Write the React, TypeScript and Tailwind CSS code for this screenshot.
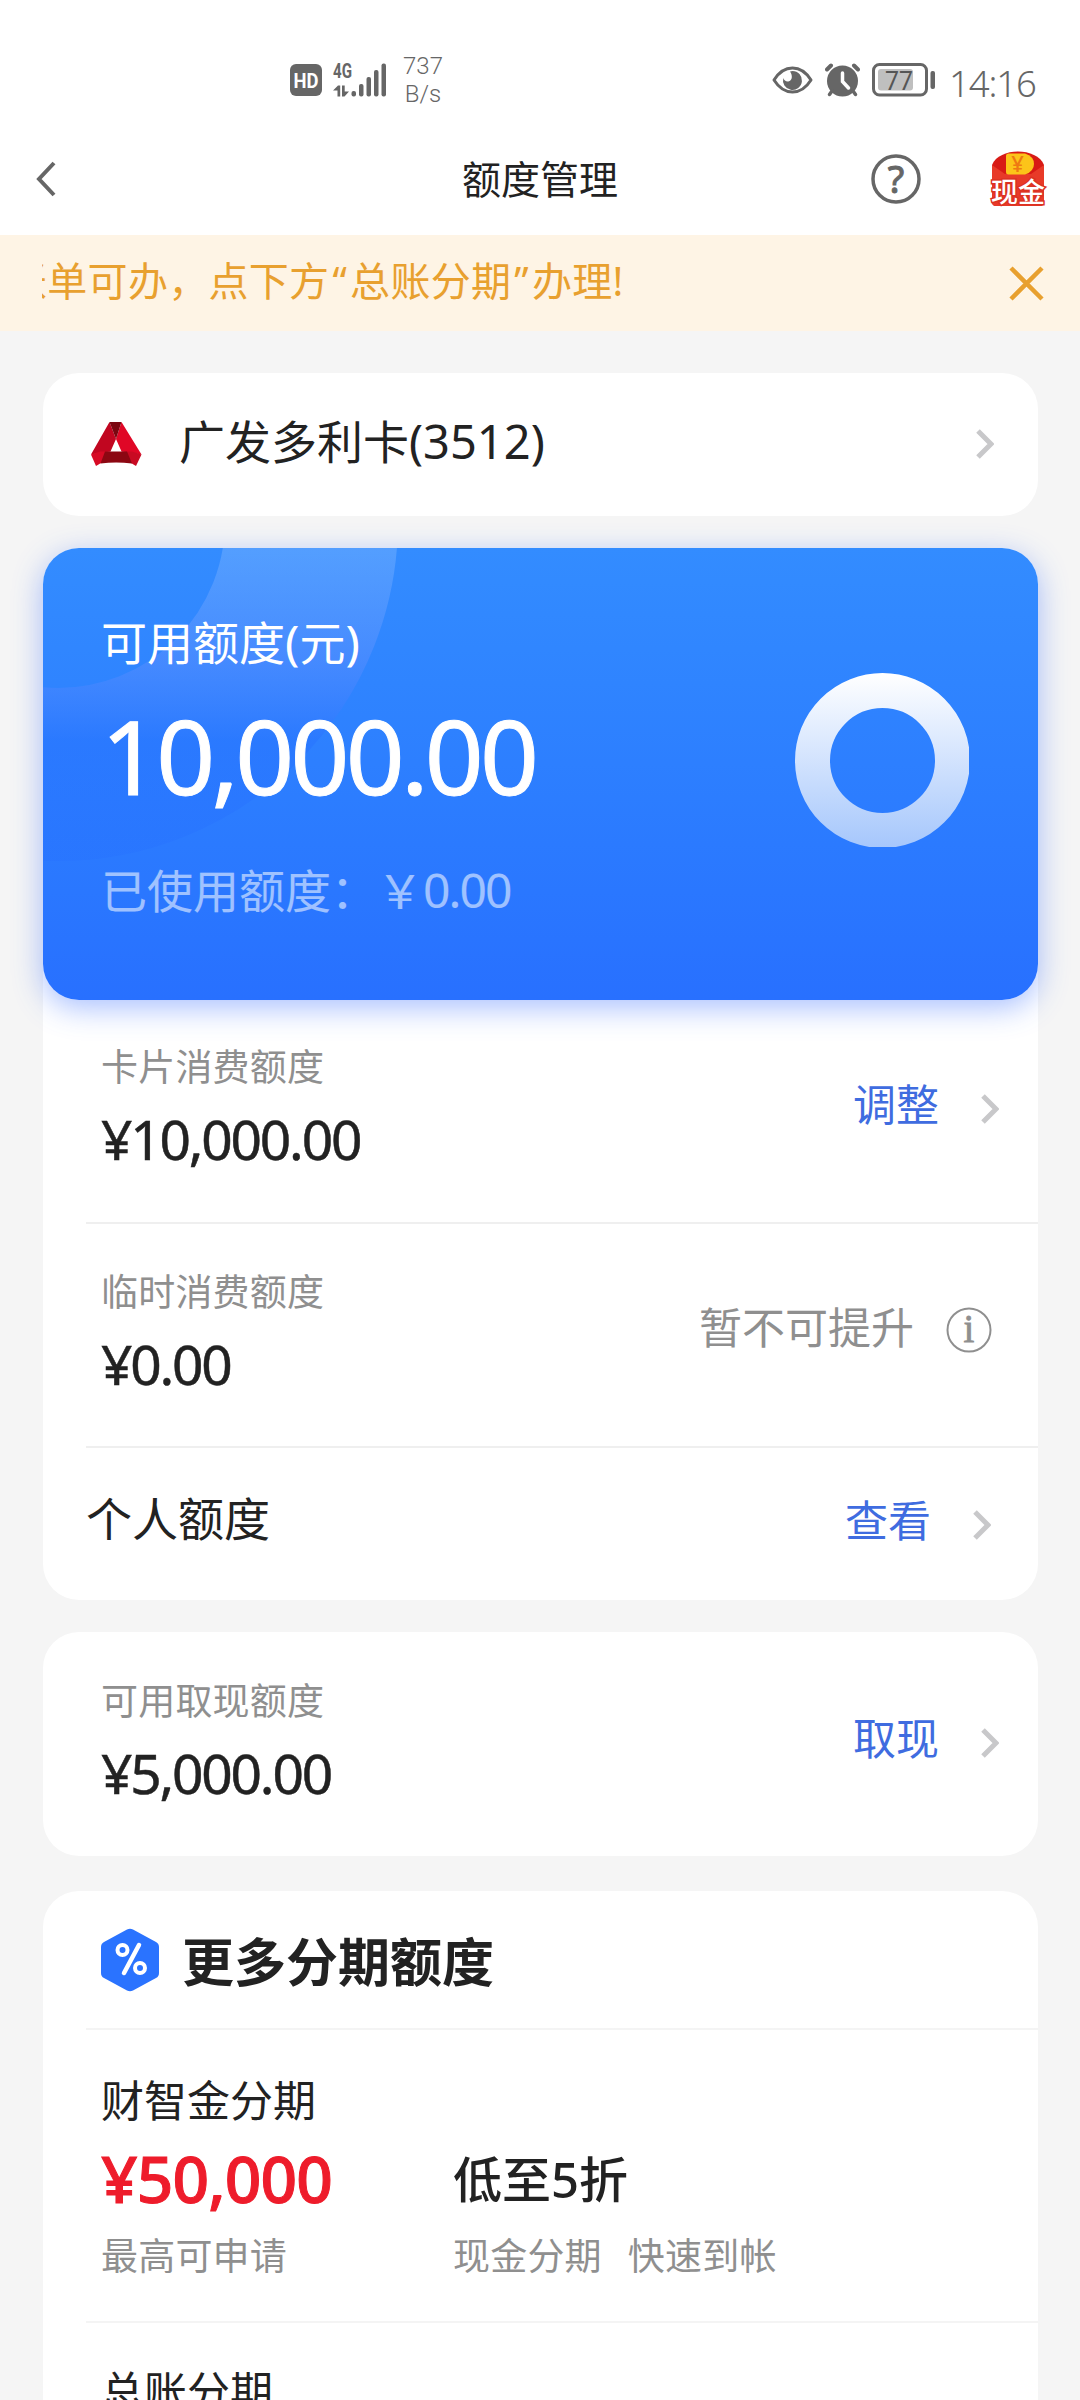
import type { ReactNode } from 'react';
import clsx from 'clsx';

function StatusBar() {
  return (
    <div className="flex h-[106px] items-center justify-between pt-[54px] pr-[39px] pl-[290px] text-[#666]">
      <div className="flex items-center">
        <svg width="32" height="32" viewBox="0 0 32 32">
          <rect width="32" height="32" rx="6" fill="#666" />
          <text x="16" y="23.5" textAnchor="middle" fontSize="20" fontWeight="700" fill="#fff" fontFamily="Roboto, sans-serif" textLength="25" lengthAdjust="spacingAndGlyphs">HD</text>
        </svg>
        <svg className="ml-[11px] overflow-visible" width="53" height="34" viewBox="0 0 53 34" fill="#666">
          <text x="0" y="15" fontSize="20" fontWeight="700" fontFamily="Roboto, sans-serif" textLength="19" lengthAdjust="spacingAndGlyphs">4G</text>
          <path d="M0 27.5 5 22.5h2.2V33.5H4.5V27.5zM9 22.5h2.7V28.5H16L11.5 33.5H9z" />
          <rect x="18.5" y="28" width="4.5" height="5.5" rx="2" />
          <rect x="26" y="21" width="4.5" height="12.5" rx="2" />
          <rect x="33.5" y="14" width="4.5" height="19.5" rx="2" />
          <rect x="41" y="7" width="4.5" height="26.5" rx="2" />
          <rect x="48.5" y="0.5" width="4.5" height="33" rx="2" />
        </svg>
        <div className="ml-[17px] text-center font-[Roboto,sans-serif] text-[24px] leading-[28px] font-light">
          <p>737</p>
          <p>B/s</p>
        </div>
      </div>
      <div className="flex items-center">
        <svg width="41" height="28" viewBox="0 0 41 28" fill="none">
          <path d="M2 14C7 6 13 2 20.500 2S34 6 39 14C34 22 28 26 20.500 26S7 22 2 14z" stroke="#666" strokeWidth="3" strokeLinejoin="round" />
          <path d="M20.500 5a9.500 9.500 0 1 1-9.200 7c.8 2.600 3.200 4 5.700 3.200 3.400-1.200 3.800-6 1-9.800z" fill="#666" />
        </svg>
        <svg className="ml-3" width="35" height="34" viewBox="0 0 35 34" fill="none" strokeLinecap="round">
          <circle cx="17.500" cy="18" r="15.500" fill="#666" />
          <path d="M2 6.500 6 2.500M33 6.500 29 2.500" stroke="#666" strokeWidth="4" />
          <path d="M7 28 4.500 31.500M28 28l2.500 3.500" stroke="#666" strokeWidth="3.500" />
          <path d="M17.500 10v8.500l6 6.500" stroke="#fff" strokeWidth="3.500" />
        </svg>
        <svg className="ml-3" width="63" height="34" viewBox="0 0 63 34">
          <rect x="1.500" y="1.500" width="53" height="30.500" rx="6" fill="none" stroke="#666" strokeWidth="3" />
          <rect x="6" y="6" width="35" height="21.500" rx="3" fill="#bfbfbf" />
          <rect x="58.500" y="8" width="4.500" height="18" rx="2" fill="#666" />
          <text x="27" y="26.500" textAnchor="middle" fontSize="26" fill="#555" fontFamily="Roboto, sans-serif" textLength="28" lengthAdjust="spacingAndGlyphs">77</text>
        </svg>
        <p className="ml-[14px] w-[92px] pt-[6px] text-[36.5px] leading-[44px] font-light tracking-[-0.03em] whitespace-nowrap">14:16</p>
      </div>
    </div>
  );
}

function CashPacket() {
  return (
    <svg className="overflow-visible" width="56" height="58" viewBox="0 0 56 58">
      <path d="M2 15C9-3 47-3 54 15V52q0 4-4 4H6q-4 0-4-4z" fill="#d81a15" />
      <path d="M2 15 15 24H41L54 15V52q0 4-4 4H6q-4 0-4-4z" fill="#e83a28" />
      <path d="M16 6q0-2.500 2.500-2.500H35q9 3 9 10.500t-9 10.500H18.500Q16 24.500 16 22z" fill="#fcc419" />
      <text x="27.500" y="21.500" textAnchor="middle" fontSize="22" fontWeight="500" fill="#ee7a12">¥</text>
      <text x="28" y="52" textAnchor="middle" fontSize="27" fontWeight="500" fill="#fff" stroke="#dc3222" strokeWidth="3" paintOrder="stroke" textLength="54">现金</text>
    </svg>
  );
}

function Header() {
  return (
    <header className="grid h-[129px] grid-cols-[1fr_auto_1fr] items-center pt-4 pr-[34px] pl-[34px]">
      <svg className="ml-[2px]" width="20" height="36" viewBox="0 0 20 36" fill="none">
        <path d="M18 2 3 18 18 34" stroke="#666" strokeWidth="4" />
      </svg>
      <h1 className="text-[39px] leading-none text-[#222]">额度管理</h1>
      <div className="flex items-center justify-end gap-[69px]">
        <svg className="overflow-visible" width="50" height="50" viewBox="0 0 50 50">
          <circle cx="25" cy="25" r="23" fill="none" stroke="#666" strokeWidth="3.500" />
          <text x="25" y="38.500" textAnchor="middle" fontSize="38" fill="#666" stroke="#666" strokeWidth="1">?</text>
        </svg>
        <CashPacket />
      </div>
    </header>
  );
}

function Notice() {
  return (
    <div className="flex h-[96px] items-center justify-between bg-[#fef4e5] pr-[36px] pl-[42px] text-[#e8a02f]">
      <div className="mb-[5px] overflow-hidden">
        <p className="-ml-[35px] text-[40px] leading-[56px] tracking-[0.3px] whitespace-nowrap">
          账单可办，点下方<span className="px-[3px]">“</span>总账分期<span className="px-[3px]">”</span>办理!
        </p>
      </div>
      <svg width="35" height="35" viewBox="0 0 35 35" fill="none">
        <path d="M2 2 33 33M33 2 2 33" stroke="#e8a02f" strokeWidth="4.500" />
      </svg>
    </div>
  );
}

function Chevron() {
  return (
    <svg className="shrink-0" width="18" height="30" viewBox="0 0 18 30" fill="none">
      <path d="M2 2 15 15 2 28" stroke="#c8c8ca" strokeWidth="5" />
    </svg>
  );
}

function BankLogo() {
  return (
    <svg width="52" height="46" viewBox="0 0 52 46">
      <path d="M19.500 0 26 17 20.500 29.500 10 31 1 32.500z" fill="#c10620" />
      <path d="M31.500 0 51.500 32.500 42 31 31.500 29.500 26 17z" fill="#e00726" />
      <path d="M19.500 0H31.500L26 17z" fill="#7a0710" />
      <path d="M1 32.500 10 29.500H20.500L11 41 6 44z" fill="#d70a25" />
      <path d="M51.500 32.500 42 29.500H31.500L41 41 46 44z" fill="#c80a22" />
      <path d="M15 29.500H37L42 41.500Q26 39.500 10.500 41.500z" fill="#8c0712" />
    </svg>
  );
}

function QuotaCard() {
  return (
    <div className="relative flex h-[452px] items-start justify-between overflow-hidden rounded-[36px] bg-gradient-to-b from-[#338cff] to-[#2870ff] pl-[58px] text-white">
      <svg className="absolute top-0 left-0" width="400" height="452" viewBox="0 0 400 452">
        <defs>
          <linearGradient id="arc" x1="0" y1="0" x2="0" y2="320" gradientUnits="userSpaceOnUse">
            <stop offset="0" stopColor="#fff" stopOpacity="0.16" />
            <stop offset="0.35" stopColor="#a8a0ff" stopOpacity="0.18" />
            <stop offset="0.6" stopColor="#2060ff" stopOpacity="0.22" />
            <stop offset="1" stopColor="#1f60ff" stopOpacity="0.12" />
          </linearGradient>
        </defs>
        <circle cx="15" cy="-27" r="253.500" fill="none" stroke="url(#arc)" strokeWidth="173" />
      </svg>
      <div className="relative">
        <p className="mt-[67px] text-[46px] leading-[54px]">
          可用额度<span className="text-[48px]">(</span>元<span className="text-[48px]">)</span>
        </p>
        <p className="mt-[26px] text-[103px] leading-[120px] tracking-[-0.036em] [-webkit-text-stroke:1px_white]">10,000.00</p>
        <p className="mt-[48px] text-[46px] leading-[54px] text-white/55">
          已使用额度：￥<span className="text-[48px] tracking-[-0.04em]">0.00</span>
        </p>
      </div>
      <svg className="relative mt-[125px] mr-[69px]" width="174" height="174" viewBox="0 0 174 174">
        <defs>
          <linearGradient id="ring" x1="0" y1="0" x2="0" y2="174" gradientUnits="userSpaceOnUse">
            <stop offset="0" stopColor="#fff" />
            <stop offset="1" stopColor="#a6c7fc" />
          </linearGradient>
        </defs>
        <circle cx="87.500" cy="87.500" r="70" fill="none" stroke="url(#ring)" strokeWidth="35" />
      </svg>
    </div>
  );
}

interface LimitRowProps {
  label: string;
  amount: string;
  children: ReactNode;
  className?: string;
}

function LimitRow({ label, amount, children, className }: LimitRowProps) {
  return (
    <div className={clsx('flex justify-between pl-[15px]', className)}>
      <div>
        <p className="text-[37px] leading-[46px] tracking-[0.2px] text-[#8f8f8f]">{label}</p>
        <p className="mt-[19px] text-[55px] leading-[60px] tracking-[-0.04em] text-[#222] [-webkit-text-stroke:0.5px_#222]">{amount}</p>
      </div>
      <div className="mt-[35px] flex h-[56px] items-center">{children}</div>
    </div>
  );
}

function ActionLink({ text }: { text: string }) {
  return (
    <>
      <span className="mb-[5px] text-[43px] leading-none text-[#3f6ce0]">{text}</span>
      <span className="mt-1 ml-[42px]">
        <Chevron />
      </span>
    </>
  );
}

function PercentIcon() {
  return (
    <svg width="58" height="64" viewBox="0 0 58 64" fill="none">
      <path d="M26 1.500q3-1.500 6 0L55 14q3 1.500 3 5V45q0 3.500-3 5L32 62.500q-3 1.500-6 0L3 50q-3-1.500-3-5V19q0-3.500 3-5z" fill="#2a73ff" />
      <path d="M38 17 23 45" stroke="#fff" strokeWidth="4.500" strokeLinecap="round" />
      <circle cx="21.500" cy="22" r="5" stroke="#fff" strokeWidth="4" />
      <circle cx="39" cy="40" r="5" stroke="#fff" strokeWidth="4" />
    </svg>
  );
}

export default function App() {
  return (
    <div
      lang="zh-CN"
      className="h-[2400px] w-[1080px] overflow-hidden bg-[#f5f5f5] font-['Noto_Sans','Noto_Sans_CJK_SC',sans-serif] text-[#222]"
    >
      <div className="bg-white">
        <StatusBar />
        <Header />
      </div>
      <Notice />

      <main className="flex flex-col pt-[42px] pr-[42px] pl-[43px]">
        <section className="flex h-[143px] items-center rounded-[36px] bg-white pr-[44px] pl-[47px]">
          <BankLogo />
          <p className="mb-[7px] ml-[37px] flex-1 text-[46px] leading-none">
            广发多利卡<span className="text-[47px]">(3512)</span>
          </p>
          <div className="mb-[2px]">
            <Chevron />
          </div>
        </section>

        <section className="mt-8 rounded-[36px] bg-white">
          <div className="rounded-[36px] shadow-[0_8px_30px_rgba(50,105,255,0.42)]">
            <QuotaCard />
          </div>
          <div className="pl-[43px]">
            <LimitRow label="卡片消费额度" amount="¥10,000.00" className="h-[224px] border-b-2 border-[#efefef] pt-[44px] pr-[39px]">
              <ActionLink text="调整" />
            </LimitRow>
            <LimitRow label="临时消费额度" amount="¥0.00" className="h-[224px] border-b-2 border-[#efefef] pt-[45px] pr-[46px]">
              <span className="mb-[10px] text-[43px] leading-none text-[#8f8f8f]">暂不可提升</span>
              <svg className="mb-1 ml-[32px] overflow-visible" width="46" height="46" viewBox="0 0 46 46">
                <circle cx="23" cy="23" r="21.500" fill="none" stroke="#8f8f8f" strokeWidth="2" />
                <text x="23" y="35" textAnchor="middle" fontSize="39" fill="#8f8f8f" stroke="#8f8f8f" strokeWidth="0.8" fontFamily="'Liberation Serif', serif">i</text>
              </svg>
            </LimitRow>
            <div className="flex h-[150px] items-center pr-[44px]">
              <p className="mb-[11px] flex-1 text-[46px] leading-none">个人额度</p>
              <div className="flex items-center pr-[3px]">
                <ActionLink text="查看" />
              </div>
            </div>
            <div className="h-[2px]" />
          </div>
        </section>

        <section className="mt-8 h-[224px] rounded-[36px] bg-white pl-[43px]">
          <LimitRow label="可用取现额度" amount="¥5,000.00" className="pt-[46px] pr-[39px]">
            <ActionLink text="取现" />
          </LimitRow>
        </section>

        <section className="mt-[35px] rounded-t-[36px] bg-white pl-[43px]">
          <div className="flex h-[139px] items-center border-b-2 border-[#f4f4f4] pl-[15px]">
            <PercentIcon />
            <h2 className="mt-[5px] ml-[23px] text-[52px] leading-none font-bold">更多分期额度</h2>
          </div>
          <div className="h-[293px] border-b-2 border-[#f4f4f4] pt-[45px] pl-[15px]">
            <p className="text-[43px] leading-[52px]">财智金分期</p>
            <div className="mt-[17px] flex">
              <div className="w-[352px]">
                <p className="text-[64px] leading-[70px] font-medium tracking-[-0.014em] text-[#ee1c2b] [-webkit-text-stroke:1px_#ee1c2b]">¥50,000</p>
                <p className="mt-[18px] text-[37px] leading-[48px] tracking-[0.2px] text-[#8f8f8f]">最高可申请</p>
              </div>
              <div>
                <p className="text-[49px] leading-[70px] font-medium">低至5折</p>
                <p className="mt-[18px] flex gap-[26px] text-[37px] leading-[48px] tracking-[0.2px] text-[#8f8f8f]">
                  <span>现金分期</span>
                  <span>快速到帐</span>
                </p>
              </div>
            </div>
          </div>
          <p className="pt-[43px] pl-[15px] text-[43px] leading-[52px]">总账分期</p>
        </section>
      </main>
    </div>
  );
}
